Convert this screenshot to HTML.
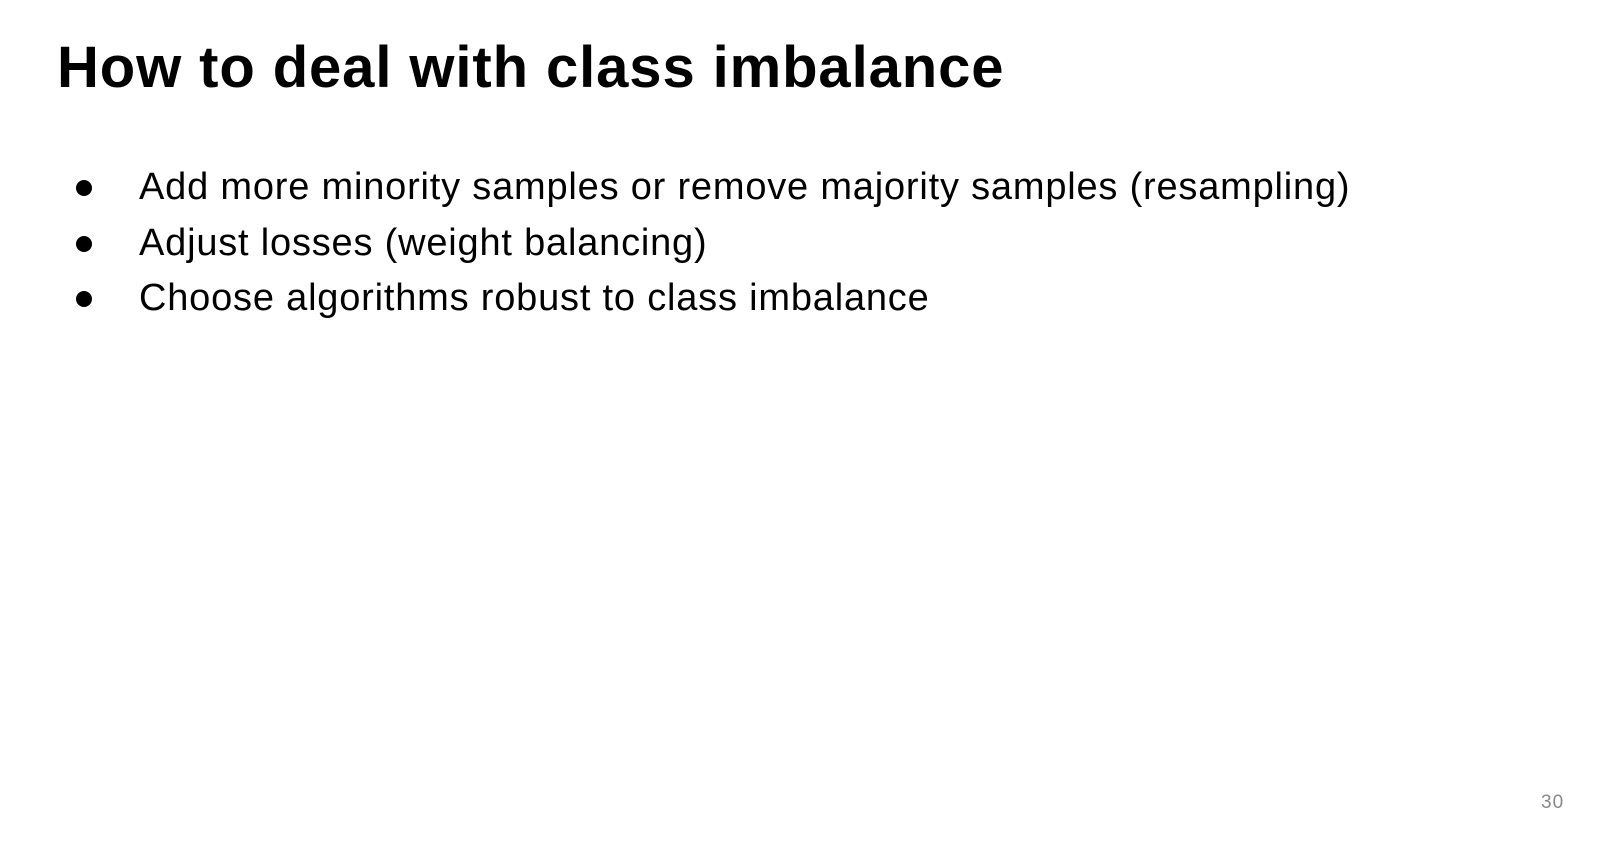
<!DOCTYPE html>
<html><head><meta charset="utf-8"><style>
body{margin:0;width:1598px;height:842px;background:#fff;font-family:"Liberation Sans",sans-serif;position:relative;overflow:hidden;color:#000}
h1{position:absolute;left:57px;top:30px;margin:0;font-size:58px;font-weight:bold;letter-spacing:0.9px;line-height:76px}
.b{position:absolute;left:0;font-size:38px;line-height:40px;letter-spacing:0.8px}
.b span.d{position:absolute;left:76px;top:13px;width:16px;height:16px;border-radius:50%;background:#000}
.b span.t{position:absolute;left:139px;white-space:nowrap}
.pn{position:absolute;left:1541px;top:792px;font-size:19px;color:#888;letter-spacing:1px}
</style></head><body>
<h1>How to deal with class imbalance</h1>
<div class="b" style="top:167px"><span class="d"></span><span class="t">Add more minority samples or remove majority samples (resampling)</span></div>
<div class="b" style="top:222.5px"><span class="d"></span><span class="t">Adjust losses (weight balancing)</span></div>
<div class="b" style="top:278px"><span class="d"></span><span class="t">Choose algorithms robust to class imbalance</span></div>
<div class="pn">30</div>
</body></html>
